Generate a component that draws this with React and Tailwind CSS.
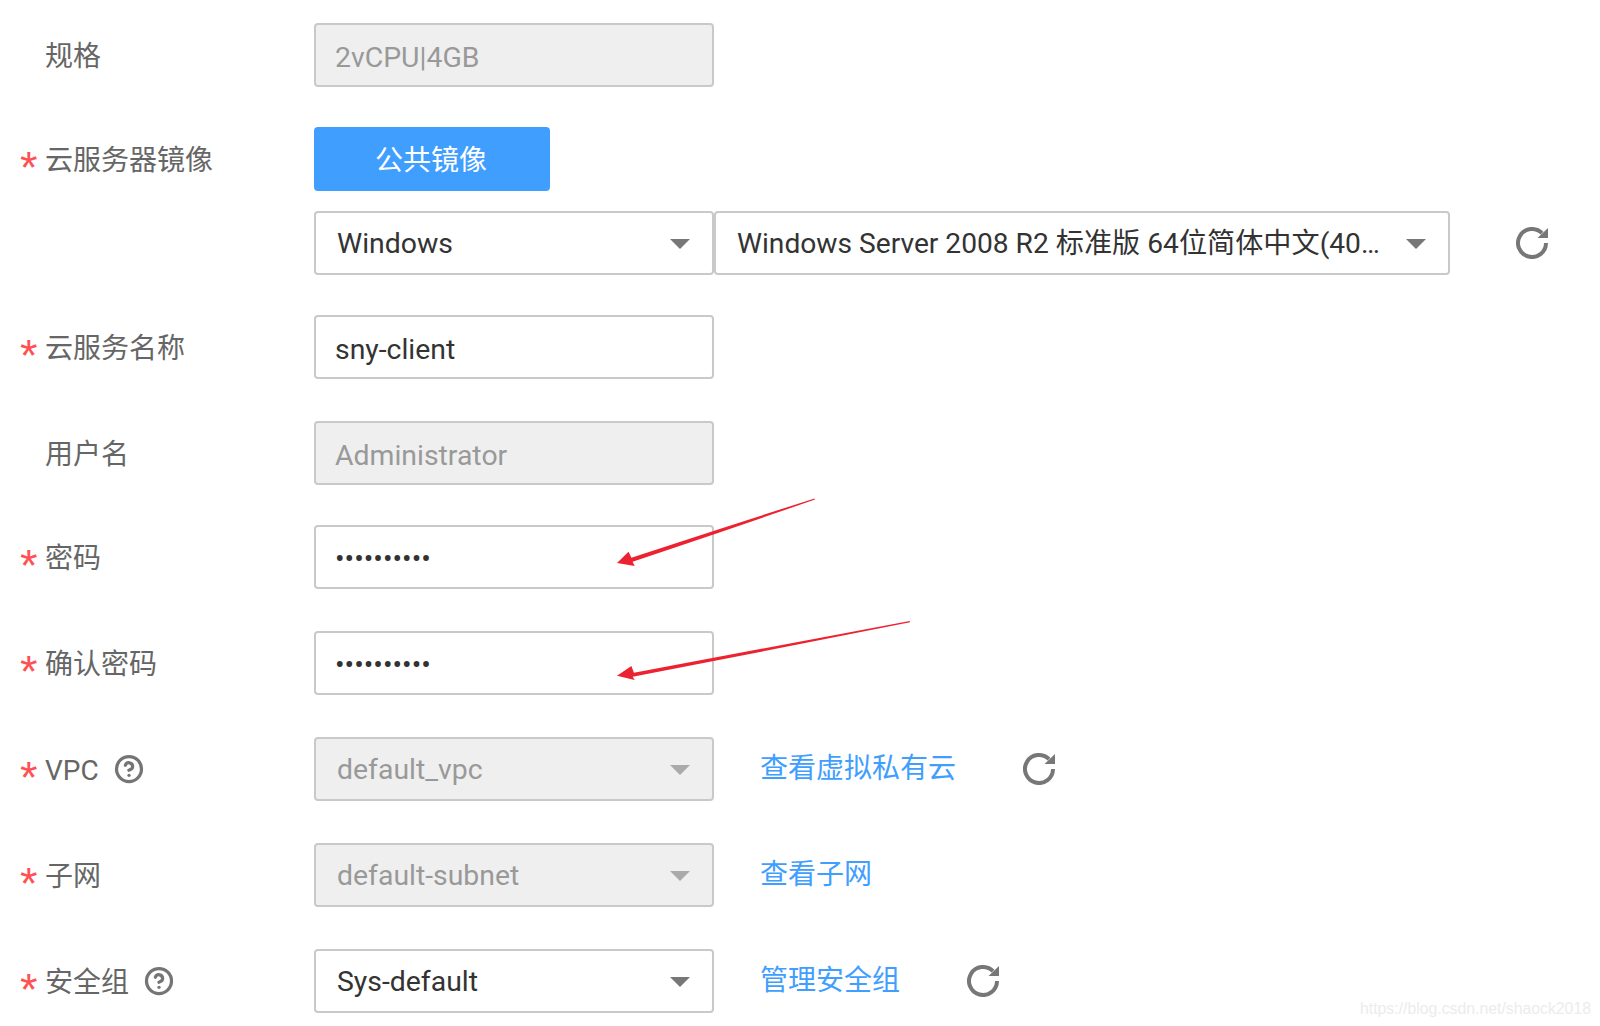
import React from 'react'
import { HelpCircle } from 'lucide-react'

const Refresh = () => (
  <svg className="h-8 w-8 shrink-0" viewBox="0 0 32 32" fill="none">
    <path d="M26 6.2A14 14 0 1 0 30 16" stroke="#777777" strokeWidth="4" />
    <path d="M32 1V11H21.5Z" fill="#777777" />
  </svg>
)

const Caret = ({ disabled }) => (
  <span
    className={`mt-[2px] h-0 w-0 shrink-0 border-x-[10px] border-t-[10px] border-x-transparent ${
      disabled ? 'border-t-[#aaaaaa]' : 'border-t-[#777777]'
    }`}
  />
)

const Help = () => <HelpCircle className="-mt-[5px] ml-[15px] h-[30px] w-[30px] shrink-0 text-[#757575]" strokeWidth={2.6} />

const Label = ({ required, children }) => (
  <div className="flex w-[314px] shrink-0 items-center pl-[20px] pt-[4px] text-[#666666]">
    <span className="w-[25px] shrink-0 pt-[12px] font-['Liberation_Sans',sans-serif] text-[45px] leading-none text-[#ff5053]">
      {required ? '*' : ''}
    </span>
    {children}
  </div>
)

const TextBox = ({ value, disabled, type = 'text' }) => (
  <input
    readOnly
    type={type}
    value={value}
    className={`h-[64px] w-[400px] rounded border-2 border-[#c9c9c9] px-[19px] text-[28.4px] outline-none ${
      type === 'password' ? 'pt-[2px]' : 'pt-[4px]'
    } ${disabled ? 'bg-[#efefef] text-[#999999]' : 'bg-white text-[#333333]'}`}
  />
)

const Select = ({ value, disabled, wide }) => (
  <div
    className={`flex h-[64px] items-center justify-between rounded border-2 border-[#c9c9c9] pl-[21px] pr-[22px] ${
      wide ? 'w-[736px]' : 'w-[400px]'
    } ${disabled ? 'bg-[#efefef] text-[#999999]' : 'bg-white text-[#333333]'}`}
  >
    <span className={`whitespace-nowrap pt-[2px] ${wide ? 'text-[28.17px]' : 'text-[28.4px]'}`}>{value}</span>
    <Caret disabled={disabled} />
  </div>
)

const Link = ({ children }) => (
  <a className="ml-[46px] whitespace-nowrap text-[#409eff]">{children}</a>
)

export default function App() {
  return (
    <div className="relative h-[1026px] w-[1600px] overflow-hidden bg-white pt-[23px] font-['Roboto','Noto_Sans_CJK_SC',sans-serif] text-[28px]">
      <div className="flex flex-col">
        <div className="mb-[40px] flex">
          <Label>规格</Label>
          <TextBox value="2vCPU|4GB" disabled />
        </div>

        <div className="mb-[20px] flex">
          <Label required>云服务器镜像</Label>
          <button className="h-[64px] w-[236px] rounded bg-[#409eff] pr-[2px] pt-[3px] text-white">公共镜像</button>
        </div>

        <div className="mb-[40px] flex items-center">
          <div className="w-[314px] shrink-0" />
          <Select value="Windows" />
          <Select value="Windows Server 2008 R2 标准版 64位简体中文(40…" wide />
          <div className="ml-[66px]">
            <Refresh />
          </div>
        </div>

        <div className="mb-[42px] flex">
          <Label required>云服务名称</Label>
          <TextBox value="sny-client" />
        </div>

        <div className="mb-[40px] flex">
          <Label>用户名</Label>
          <TextBox value="Administrator" disabled />
        </div>

        <div className="mb-[42px] flex">
          <Label required>密码</Label>
          <TextBox value="**********" type="password" />
        </div>

        <div className="mb-[42px] flex">
          <Label required>确认密码</Label>
          <TextBox value="**********" type="password" />
        </div>

        <div className="mb-[42px] flex items-center">
          <Label required>
            VPC
            <Help />
          </Label>
          <Select value="default_vpc" disabled />
          <Link>查看虚拟私有云</Link>
          <div className="ml-[67px]">
            <Refresh />
          </div>
        </div>

        <div className="mb-[42px] flex items-center">
          <Label required>子网</Label>
          <Select value="default-subnet" disabled />
          <Link>查看子网</Link>
        </div>

        <div className="flex items-center">
          <Label required>
            安全组
            <Help />
          </Label>
          <Select value="Sys-default" />
          <Link>管理安全组</Link>
          <div className="ml-[67px]">
            <Refresh />
          </div>
        </div>
      </div>

      {/* red annotation arrows drawn over the form */}
      <svg className="pointer-events-none absolute left-0 top-0 h-[1026px] w-[1600px]" viewBox="0 0 1600 1026">
        <path d="M814.6 498.4L715 530.4L631.4 557.7L628.6 551.7L617 563L634.7 566L632.6 561.7L715 534L815 499.6Z" fill="#ed2230" />
        <path d="M909.8 621L760 649L633.9 672.7L631.4 666L617 675.7L634.7 680L632.7 676.7L760 652L910 622.2Z" fill="#ed2230" />
      </svg>

      <span className="absolute left-[1360px] top-[997px] font-['Liberation_Sans',sans-serif] text-[15.8px] text-[#ececec]">
        https://blog.csdn.net/shaock2018
      </span>
    </div>
  )
}
